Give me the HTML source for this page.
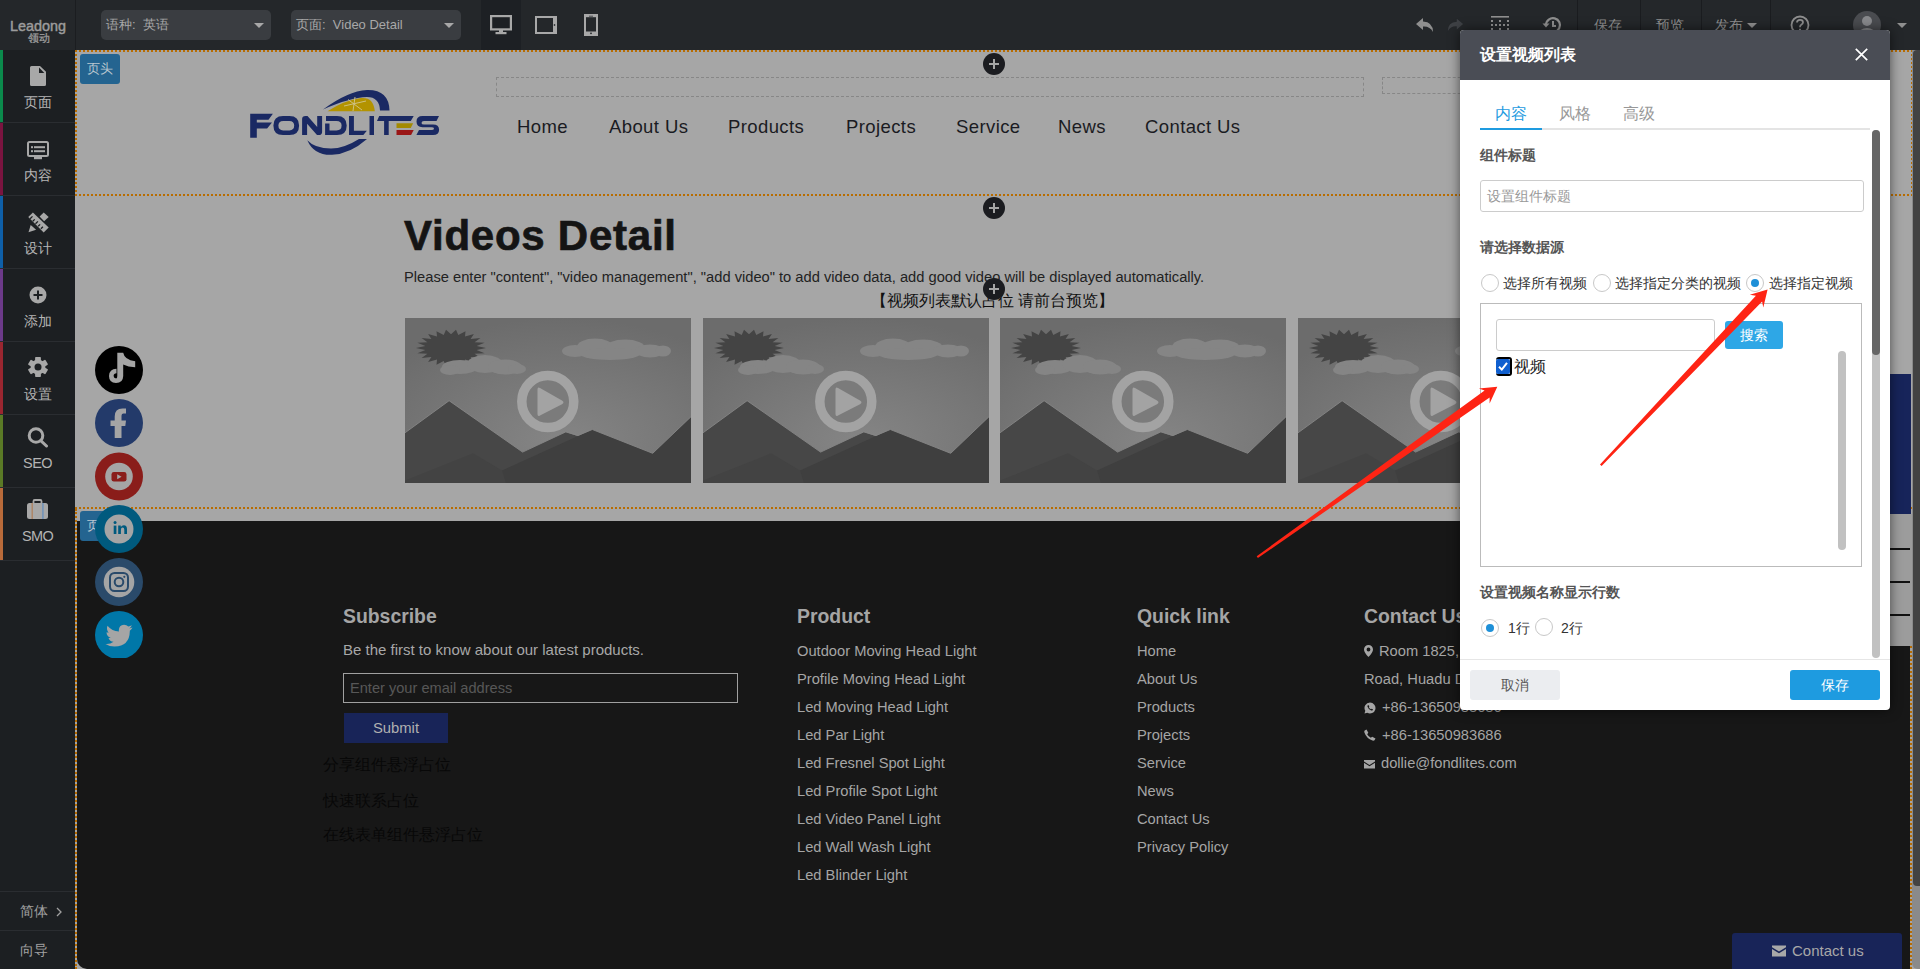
<!DOCTYPE html>
<html><head><meta charset="utf-8">
<style>
*{margin:0;padding:0;box-sizing:border-box}
html,body{width:1920px;height:969px;overflow:hidden;background:#a6a6a6;font-family:"Liberation Sans",sans-serif}
.a{position:absolute}
#top{left:0;top:0;width:1920px;height:50px;background:#24272a}
#logo{left:0;top:0;width:76px;height:50px;background:#24272a;border-right:1px solid #1b1d20}
.dd{top:10px;height:30px;width:170px;background:#3a3d41;border-radius:5px;color:#a8a8a8;font-size:13px;line-height:30px;padding-left:5px}
.dd i{position:absolute;right:7px;top:13px;width:0;height:0;border-left:5px solid transparent;border-right:5px solid transparent;border-top:5px solid #a8a8a8}
#side{left:0;top:50px;width:75px;height:919px;background:#1c1f22}
.si{left:0;width:75px;height:73px;border-bottom:1px solid #2a2d31;color:#b4b4b4;font-size:14px;text-align:center}
.si b{position:absolute;left:0;top:0;width:3px;height:72px}
.si span{position:absolute;left:0;width:75px;top:44px;line-height:16px}
#canvas{left:75px;top:50px;width:1837px;height:919px;background:#a6a6a6}
#footer{left:77px;top:521px;width:1835px;height:448px;background:#171717;border-bottom-left-radius:10px}
.dot{border:2px dotted #c27a12}
.nav{top:114px;font-size:18.5px;letter-spacing:0.4px;color:#1a1b22;line-height:26px}
.plus{width:22px;height:22px;border-radius:50%;background:#1b1c20}
.plus:before{content:"";position:absolute;left:6px;top:10px;width:10px;height:2px;background:#a5a5a5}
.plus:after{content:"";position:absolute;left:10px;top:6px;width:2px;height:10px;background:#a5a5a5}
.fh{top:603px;font-size:19.4px;font-weight:bold;color:#a5a5a5;line-height:26px}
.ft{font-size:15px;color:#a8a8a8;line-height:20px}
.fl{font-size:14.7px;color:#a5a5a5;line-height:28px;height:28px;white-space:nowrap}
.lbl{font-size:14px;font-weight:bold;color:#555;line-height:20px}
.rad{width:18px;height:18px;border:1px solid #c8c8c8;border-radius:50%;background:#fff}
.rad.on:after{content:"";position:absolute;left:4px;top:4px;width:8px;height:8px;border-radius:50%;background:#1e90d8}
.rtx{font-size:14px;color:#333;line-height:20px}
</style></head>
<body>
<div class="a" id="canvas"></div>
<div class="a" id="footer"></div>

<!-- header section -->
<div class="a" style="left:75px;top:50px;width:1838px;height:146px;border:2px dotted #b86c00"></div>
<div class="a" style="left:80px;top:54px;width:40px;height:30px;background:#246490;border-radius:3px;color:#b9c6cf;font-size:12.5px;line-height:30px;text-align:center">页头</div>
<div class="a" style="left:496px;top:77px;width:868px;height:20px;border:1px dashed #878787"></div>
<div class="a" style="left:1382px;top:77px;width:200px;height:17px;border:1px dashed #878787"></div>
<div class="a nav" style="left:517px">Home</div>
<div class="a nav" style="left:609px">About Us</div>
<div class="a nav" style="left:728px">Products</div>
<div class="a nav" style="left:846px">Projects</div>
<div class="a nav" style="left:956px">Service</div>
<div class="a nav" style="left:1058px">News</div>
<div class="a nav" style="left:1145px">Contact Us</div>
<svg class="a" style="left:240px;top:80px" width="210" height="85" viewBox="0 0 210 85">
 <g fill="#1a2963" fill-rule="evenodd">
  <path d="M10.2 33.7H32.9L28.5 39.8H16.8V42.5H32L27.1 48.5H16.8V57.8H10.2Z"/>
  <path d="M43 35.9H49.5Q59.1 35.9 59.1 45.5Q59.1 55.1 49.5 55.1H43Q33.4 55.1 33.4 45.5Q33.4 35.9 43 35.9ZM43.2 40.9Q38.4 40.9 38.4 45.6Q38.4 50.4 43.2 50.4H49.4Q54.2 50.4 54.2 45.6Q54.2 40.9 49.4 40.9Z"/>
  <path d="M62.1 55.1V39Q62.1 35.9 65.5 35.9H67.5L77.2 47V35.9H82.1V52Q82.1 55.1 78.7 55.1H77L67.1 43.8V55.1Z"/>
  <path d="M86 35.9H97Q106.7 35.9 106.7 45.5Q106.7 55.1 97 55.1H85.1V43.6H89.5V50.4H96.5Q101.6 50.4 101.6 45.5Q101.6 40.9 96.5 40.9H86Z"/>
  <path d="M109 36H113.9V50.7H126.9L123.3 55H109Z"/>
  <path d="M129.5 36H134V55H129.5Z"/>
  <path d="M139.2 36.1H173.7L170.8 41H148.7V55H144.1V41H137Z"/>
  <path d="M199 36.1L196.5 41H184Q181.5 41 181.5 43Q181.5 44.6 184 44.6H193Q199.1 44.6 199.1 49.8Q199.1 55 193 55H176.4L179 50.1H191.5Q194 50.1 194 48.5Q194 47.2 191.5 47.2H182.5Q176.5 47.2 176.5 41.6Q176.5 36.1 182.5 36.1Z"/>
  <path d="M83 29.5Q108 11 127 10Q149 9.5 149.5 30.6H140Q139.5 17 127 17Q110 17.5 83 29.5Z"/>
  <path d="M67.3 60.2Q74 75.5 92 74.8Q110 74 127 59H119Q104 68.5 91 68.5Q75 68.5 67.3 60.2Z"/>
 </g>
 <path d="M156.5 43.2H173.1L170.8 48.1H156.5Z" fill="#a38a00"/>
 <path d="M156.5 50.1H173.7L171.1 55H156.5Z" fill="#9a1616"/>
 <path d="M87.5 31.2Q104 20.5 121 18Q133.5 16.8 134.8 31.2Z" fill="#b39300"/>
 <path d="M104 26L126 21M108 19.5L122 30M115 17L113 31" stroke="#d0c590" stroke-width="0.9"/>
</svg>
<div class="a plus" style="left:983px;top:53px"></div>

<!-- content section -->
<div class="a plus" style="left:983px;top:197px"></div>
<div class="a" id="vtitle" style="left:404px;top:212px;font-size:42px;font-weight:bold;color:#141414;line-height:48px;letter-spacing:0.75px;-webkit-text-stroke:0.7px #141414">Videos Detail</div>
<div class="a" style="left:404px;top:267px;font-size:14.7px;color:#222;line-height:20px">Please enter "content", "video management", "add video" to add video data, add good video will be displayed automatically.</div>
<div class="a" style="left:871px;top:291px;font-size:16px;color:#111;line-height:20px;letter-spacing:-0.1px">【视频列表默认占位 请前台预览】</div>
<div class="a plus" style="left:983px;top:278px"></div>
<div class="a" style="left:75px;top:507px;width:1838px;height:2px;border-top:2px dotted #b86c00"></div>
<div class="a" style="left:75px;top:509px;width:2px;height:460px;border-left:2px dotted #b86c00;background:#a5a5a5"></div>

<div class="a" style="left:405px;top:318px;width:286px;height:165px;overflow:hidden"><svg width="286" height="165" viewBox="0 0 286 165"><defs><radialGradient id="sky" cx="0.55" cy="0.75" r="0.75"><stop offset="0" stop-color="#858585"/><stop offset="1" stop-color="#6c6c6c"/></radialGradient></defs>
<rect width="286" height="165" fill="url(#sky)"/>
<path d="M81.0 30.0L71.6 31.9L79.6 35.2L69.6 35.7L75.4 40.0L65.6 39.0L68.9 44.0L60.0 41.5L60.5 46.8L53.3 43.1L51.0 48.3L46.0 43.7L41.0 48.3L38.7 43.1L31.5 46.8L32.0 41.5L23.1 44.0L26.4 39.0L16.6 40.0L22.4 35.7L12.4 35.2L20.4 31.9L11.0 30.0L20.4 28.1L12.4 24.8L22.4 24.3L16.6 20.0L26.4 21.0L23.1 16.0L32.0 18.5L31.5 13.2L38.7 16.9L41.0 11.7L46.0 16.3L51.0 11.7L53.3 16.9L60.5 13.2L60.0 18.5L68.9 16.0L65.6 21.0L75.4 20.0L69.6 24.3L79.6 24.8L71.6 28.1Z" fill="#444"/>
<g fill="#858585"><ellipse cx="55" cy="49" rx="18" ry="7"/><ellipse cx="80" cy="46" rx="18" ry="9"/><ellipse cx="100" cy="49" rx="17" ry="7.5"/><ellipse cx="112" cy="51" rx="9" ry="5"/><ellipse cx="45" cy="52" rx="10" ry="5"/>
<ellipse cx="170" cy="33" rx="13" ry="6"/><ellipse cx="190" cy="29" rx="18" ry="8.5"/><ellipse cx="220" cy="30" rx="20" ry="8.5"/><ellipse cx="245" cy="33" rx="15" ry="6.5"/><ellipse cx="258" cy="33" rx="8" ry="5.5"/><ellipse cx="205" cy="36" rx="30" ry="6"/></g>
<path d="M0 114.8L44.1 82.7L117.6 134.1L160.8 113.9L205 129L205 165L0 165Z" fill="#474747"/>
<path d="M0 114.8L44.1 82.7L117.6 134.1L160.8 113.9L172.8 117.5" fill="none" stroke="#868686" stroke-width="0.9"/>
<path d="M97 152.4L187.3 111.5L247.7 135.3L286 98.7L286 165L97 165Z" fill="#3f3f3f"/>
<path d="M172.8 117.5L187.3 111.5L247.7 135.3L286 98.7" fill="none" stroke="#868686" stroke-width="0.9"/>
<path d="M0 162.6L68.1 135.3L97 152.4L101 165L0 165Z" fill="#434343"/>
<circle cx="142.8" cy="83.6" r="26" fill="#7b7b7b" stroke="#a3a3a3" stroke-width="9.5"/>
<path d="M135 70Q132.5 68.5 132.5 71.5V96Q132.5 99 135 97.5L157 86.2Q160 84.3 157 82.5Z" fill="#a3a3a3"/>
</svg></div>
<div class="a" style="left:703px;top:318px;width:286px;height:165px;overflow:hidden"><svg width="286" height="165" viewBox="0 0 286 165"><defs><radialGradient id="sky" cx="0.55" cy="0.75" r="0.75"><stop offset="0" stop-color="#858585"/><stop offset="1" stop-color="#6c6c6c"/></radialGradient></defs>
<rect width="286" height="165" fill="url(#sky)"/>
<path d="M81.0 30.0L71.6 31.9L79.6 35.2L69.6 35.7L75.4 40.0L65.6 39.0L68.9 44.0L60.0 41.5L60.5 46.8L53.3 43.1L51.0 48.3L46.0 43.7L41.0 48.3L38.7 43.1L31.5 46.8L32.0 41.5L23.1 44.0L26.4 39.0L16.6 40.0L22.4 35.7L12.4 35.2L20.4 31.9L11.0 30.0L20.4 28.1L12.4 24.8L22.4 24.3L16.6 20.0L26.4 21.0L23.1 16.0L32.0 18.5L31.5 13.2L38.7 16.9L41.0 11.7L46.0 16.3L51.0 11.7L53.3 16.9L60.5 13.2L60.0 18.5L68.9 16.0L65.6 21.0L75.4 20.0L69.6 24.3L79.6 24.8L71.6 28.1Z" fill="#444"/>
<g fill="#858585"><ellipse cx="55" cy="49" rx="18" ry="7"/><ellipse cx="80" cy="46" rx="18" ry="9"/><ellipse cx="100" cy="49" rx="17" ry="7.5"/><ellipse cx="112" cy="51" rx="9" ry="5"/><ellipse cx="45" cy="52" rx="10" ry="5"/>
<ellipse cx="170" cy="33" rx="13" ry="6"/><ellipse cx="190" cy="29" rx="18" ry="8.5"/><ellipse cx="220" cy="30" rx="20" ry="8.5"/><ellipse cx="245" cy="33" rx="15" ry="6.5"/><ellipse cx="258" cy="33" rx="8" ry="5.5"/><ellipse cx="205" cy="36" rx="30" ry="6"/></g>
<path d="M0 114.8L44.1 82.7L117.6 134.1L160.8 113.9L205 129L205 165L0 165Z" fill="#474747"/>
<path d="M0 114.8L44.1 82.7L117.6 134.1L160.8 113.9L172.8 117.5" fill="none" stroke="#868686" stroke-width="0.9"/>
<path d="M97 152.4L187.3 111.5L247.7 135.3L286 98.7L286 165L97 165Z" fill="#3f3f3f"/>
<path d="M172.8 117.5L187.3 111.5L247.7 135.3L286 98.7" fill="none" stroke="#868686" stroke-width="0.9"/>
<path d="M0 162.6L68.1 135.3L97 152.4L101 165L0 165Z" fill="#434343"/>
<circle cx="142.8" cy="83.6" r="26" fill="#7b7b7b" stroke="#a3a3a3" stroke-width="9.5"/>
<path d="M135 70Q132.5 68.5 132.5 71.5V96Q132.5 99 135 97.5L157 86.2Q160 84.3 157 82.5Z" fill="#a3a3a3"/>
</svg></div>
<div class="a" style="left:1000px;top:318px;width:286px;height:165px;overflow:hidden"><svg width="286" height="165" viewBox="0 0 286 165"><defs><radialGradient id="sky" cx="0.55" cy="0.75" r="0.75"><stop offset="0" stop-color="#858585"/><stop offset="1" stop-color="#6c6c6c"/></radialGradient></defs>
<rect width="286" height="165" fill="url(#sky)"/>
<path d="M81.0 30.0L71.6 31.9L79.6 35.2L69.6 35.7L75.4 40.0L65.6 39.0L68.9 44.0L60.0 41.5L60.5 46.8L53.3 43.1L51.0 48.3L46.0 43.7L41.0 48.3L38.7 43.1L31.5 46.8L32.0 41.5L23.1 44.0L26.4 39.0L16.6 40.0L22.4 35.7L12.4 35.2L20.4 31.9L11.0 30.0L20.4 28.1L12.4 24.8L22.4 24.3L16.6 20.0L26.4 21.0L23.1 16.0L32.0 18.5L31.5 13.2L38.7 16.9L41.0 11.7L46.0 16.3L51.0 11.7L53.3 16.9L60.5 13.2L60.0 18.5L68.9 16.0L65.6 21.0L75.4 20.0L69.6 24.3L79.6 24.8L71.6 28.1Z" fill="#444"/>
<g fill="#858585"><ellipse cx="55" cy="49" rx="18" ry="7"/><ellipse cx="80" cy="46" rx="18" ry="9"/><ellipse cx="100" cy="49" rx="17" ry="7.5"/><ellipse cx="112" cy="51" rx="9" ry="5"/><ellipse cx="45" cy="52" rx="10" ry="5"/>
<ellipse cx="170" cy="33" rx="13" ry="6"/><ellipse cx="190" cy="29" rx="18" ry="8.5"/><ellipse cx="220" cy="30" rx="20" ry="8.5"/><ellipse cx="245" cy="33" rx="15" ry="6.5"/><ellipse cx="258" cy="33" rx="8" ry="5.5"/><ellipse cx="205" cy="36" rx="30" ry="6"/></g>
<path d="M0 114.8L44.1 82.7L117.6 134.1L160.8 113.9L205 129L205 165L0 165Z" fill="#474747"/>
<path d="M0 114.8L44.1 82.7L117.6 134.1L160.8 113.9L172.8 117.5" fill="none" stroke="#868686" stroke-width="0.9"/>
<path d="M97 152.4L187.3 111.5L247.7 135.3L286 98.7L286 165L97 165Z" fill="#3f3f3f"/>
<path d="M172.8 117.5L187.3 111.5L247.7 135.3L286 98.7" fill="none" stroke="#868686" stroke-width="0.9"/>
<path d="M0 162.6L68.1 135.3L97 152.4L101 165L0 165Z" fill="#434343"/>
<circle cx="142.8" cy="83.6" r="26" fill="#7b7b7b" stroke="#a3a3a3" stroke-width="9.5"/>
<path d="M135 70Q132.5 68.5 132.5 71.5V96Q132.5 99 135 97.5L157 86.2Q160 84.3 157 82.5Z" fill="#a3a3a3"/>
</svg></div>
<div class="a" style="left:1298px;top:318px;width:286px;height:165px;overflow:hidden"><svg width="286" height="165" viewBox="0 0 286 165"><defs><radialGradient id="sky" cx="0.55" cy="0.75" r="0.75"><stop offset="0" stop-color="#858585"/><stop offset="1" stop-color="#6c6c6c"/></radialGradient></defs>
<rect width="286" height="165" fill="url(#sky)"/>
<path d="M81.0 30.0L71.6 31.9L79.6 35.2L69.6 35.7L75.4 40.0L65.6 39.0L68.9 44.0L60.0 41.5L60.5 46.8L53.3 43.1L51.0 48.3L46.0 43.7L41.0 48.3L38.7 43.1L31.5 46.8L32.0 41.5L23.1 44.0L26.4 39.0L16.6 40.0L22.4 35.7L12.4 35.2L20.4 31.9L11.0 30.0L20.4 28.1L12.4 24.8L22.4 24.3L16.6 20.0L26.4 21.0L23.1 16.0L32.0 18.5L31.5 13.2L38.7 16.9L41.0 11.7L46.0 16.3L51.0 11.7L53.3 16.9L60.5 13.2L60.0 18.5L68.9 16.0L65.6 21.0L75.4 20.0L69.6 24.3L79.6 24.8L71.6 28.1Z" fill="#444"/>
<g fill="#858585"><ellipse cx="55" cy="49" rx="18" ry="7"/><ellipse cx="80" cy="46" rx="18" ry="9"/><ellipse cx="100" cy="49" rx="17" ry="7.5"/><ellipse cx="112" cy="51" rx="9" ry="5"/><ellipse cx="45" cy="52" rx="10" ry="5"/>
<ellipse cx="170" cy="33" rx="13" ry="6"/><ellipse cx="190" cy="29" rx="18" ry="8.5"/><ellipse cx="220" cy="30" rx="20" ry="8.5"/><ellipse cx="245" cy="33" rx="15" ry="6.5"/><ellipse cx="258" cy="33" rx="8" ry="5.5"/><ellipse cx="205" cy="36" rx="30" ry="6"/></g>
<path d="M0 114.8L44.1 82.7L117.6 134.1L160.8 113.9L205 129L205 165L0 165Z" fill="#474747"/>
<path d="M0 114.8L44.1 82.7L117.6 134.1L160.8 113.9L172.8 117.5" fill="none" stroke="#868686" stroke-width="0.9"/>
<path d="M97 152.4L187.3 111.5L247.7 135.3L286 98.7L286 165L97 165Z" fill="#3f3f3f"/>
<path d="M172.8 117.5L187.3 111.5L247.7 135.3L286 98.7" fill="none" stroke="#868686" stroke-width="0.9"/>
<path d="M0 162.6L68.1 135.3L97 152.4L101 165L0 165Z" fill="#434343"/>
<circle cx="142.8" cy="83.6" r="26" fill="#7b7b7b" stroke="#a3a3a3" stroke-width="9.5"/>
<path d="M135 70Q132.5 68.5 132.5 71.5V96Q132.5 99 135 97.5L157 86.2Q160 84.3 157 82.5Z" fill="#a3a3a3"/>
</svg></div>

<!-- footer -->
<div class="a" style="left:80px;top:511px;width:40px;height:30px;background:#246490;border-radius:3px;color:#b9c6cf;font-size:12.5px;line-height:30px;text-align:center">页尾</div>
<div class="a fh" style="left:343px">Subscribe</div>
<div class="a ft" style="left:343px;top:640px">Be the first to know about our latest products.</div>
<div class="a" style="left:343px;top:673px;width:395px;height:30px;border:1px solid #a0a0a0;color:#575757;font-size:14.6px;line-height:28px;padding-left:6px">Enter your email address</div>
<div class="a" style="left:344px;top:713px;width:104px;height:30px;background:#182458;color:#b0b0b0;font-size:14.8px;line-height:30px;text-align:center">Submit</div>
<div class="a" style="left:323px;top:755px;color:#080808;font-size:16px;line-height:20px">分享组件悬浮占位</div>
<div class="a" style="left:323px;top:791px;color:#080808;font-size:16px;line-height:20px">快速联系占位</div>
<div class="a" style="left:323px;top:825px;color:#080808;font-size:16px;line-height:20px">在线表单组件悬浮占位</div>
<div class="a fh" style="left:797px">Product</div>
<div class="a" style="left:797px;top:637px">
<div class="fl">Outdoor Moving Head Light</div><div class="fl">Profile Moving Head Light</div><div class="fl">Led Moving Head Light</div><div class="fl">Led Par Light</div><div class="fl">Led Fresnel Spot Light</div><div class="fl">Led Profile Spot Light</div><div class="fl">Led Video Panel Light</div><div class="fl">Led Wall Wash Light</div><div class="fl">Led Blinder Light</div></div>
<div class="a fh" style="left:1137px">Quick link</div>
<div class="a" style="left:1137px;top:637px">
<div class="fl">Home</div><div class="fl">About Us</div><div class="fl">Products</div><div class="fl">Projects</div><div class="fl">Service</div><div class="fl">News</div><div class="fl">Contact Us</div><div class="fl">Privacy Policy</div></div>
<div class="a fh" style="left:1364px">Contact Us</div>
<div class="a" style="left:1364px;top:637px">
<div class="fl"><svg style="vertical-align:-1px;margin-right:6px" width="9" height="12" viewBox="0 0 9 12"><path d="M4.5 0A4.5 4.5 0 0 0 0 4.5C0 7.5 4.5 12 4.5 12S9 7.5 9 4.5A4.5 4.5 0 0 0 4.5 0ZM4.5 2.6A1.9 1.9 0 1 1 4.5 6.4A1.9 1.9 0 1 1 4.5 2.6Z" fill="#a5a5a5"/></svg>Room 1825, Huadu</div>
<div class="fl">Road, Huadu District</div>
<div class="fl"><svg style="vertical-align:-2px;margin-right:6px" width="12" height="12" viewBox="0 0 12 12"><path d="M6 0.5A5.5 5.5 0 0 0 1.3 8.8L0.5 11.5L3.3 10.8A5.5 5.5 0 1 0 6 0.5Z" fill="#a5a5a5"/><path d="M3.8 3.3Q3.3 3.8 3.5 4.8Q4.3 7.3 7.2 8.5Q8.3 8.8 8.8 8L8.9 7.3L7.6 6.7L7 7.3Q5.6 6.7 4.8 5.3L5.3 4.6L4.7 3.3Z" fill="#171717"/></svg>+86-13650983686</div>
<div class="fl"><svg style="vertical-align:-1px;margin-right:6px" width="12" height="12" viewBox="0 0 12 12"><path d="M2.5 0.5L4.3 3.8L3.2 5.2Q4.5 7.6 6.8 8.8L8.2 7.7L11.5 9.5L10.5 11.3Q9.8 12 8.5 11.6Q2.5 9.5 0.4 3.5Q0 2.2 0.7 1.5Z" fill="#a5a5a5"/></svg>+86-13650983686</div>
<div class="fl"><svg style="vertical-align:-1px;margin-right:6px" width="11" height="10" viewBox="0 0 11 10"><path d="M0 1H11V2.5L5.5 6L0 2.5Z M0 3.8L5.5 7.3L11 3.8V9.5H0Z" fill="#a5a5a5"/></svg>dollie@fondlites.com</div>
</div>
<div class="a" style="left:1732px;top:933px;width:170px;height:36px;border-radius:3px 3px 0 0;background:#182458;color:#a8a8a8;font-size:15px;line-height:36px;padding-left:40px"><svg class="a" style="left:40px;top:12px" width="14" height="12" viewBox="0 0 14 12"><path d="M0 0.5H14V2.3L7 6.6L0 2.3Z M0 4L7 8.3L14 4V11.5H0Z" fill="#a8a8a8"/></svg><span style="margin-left:20px">Contact us</span></div>


<!-- social -->
<svg class="a" style="left:95px;top:346px" width="48" height="312" viewBox="0 0 48 312">
 <circle cx="24" cy="24" r="24" fill="#000"/>
 <path d="M22.3 6.8H28.2Q29.5 14 40.2 15.3V21.3Q33 21 28.2 18.5V30Q28 37 21 37Q14 36.8 14 30Q14.2 23 21.5 22.8V27.3Q18.7 27.5 18.6 30Q18.7 32.4 21.2 32.4Q22.3 32.3 22.3 30Z" fill="#a5a5a5"/>
 <circle cx="24" cy="77" r="24" fill="#233a6a"/>
 <path d="M19.7 92V80H15.5V74.6H19.7V70.5Q19.7 62.5 27.5 62.5H31V67.5H28.5Q26.5 67.5 26.5 69.8V74.6H31L30.3 80H26.5V92Z" fill="#a5a5a5"/>
 <circle cx="24" cy="130.5" r="24" fill="#8a1d1a"/>
 <circle cx="24" cy="130.5" r="13.8" fill="#a5a5a5"/>
 <rect x="16.5" y="126" width="15" height="9.6" rx="2.4" fill="#8a1d1a"/>
 <path d="M22.2 128.2V133.2L26.6 130.7Z" fill="#a5a5a5"/>
 <circle cx="24" cy="183" r="24" fill="#005a7e"/>
 <circle cx="24" cy="183" r="14.5" fill="#a5a5a5"/>
 <g fill="#005a7e"><rect x="18.7" y="179.6" width="2.7" height="8.4"/><circle cx="20.05" cy="176.6" r="1.5"/><path d="M23.2 179.6H25.8V180.9Q26.8 179.3 28.9 179.3Q32 179.3 32 183.2V188H29.3V183.7Q29.3 181.6 27.7 181.6Q25.9 181.6 25.9 183.9V188H23.2Z"/></g>
 <circle cx="24" cy="236" r="24" fill="#2a4a6a"/>
 <circle cx="24" cy="236" r="15.3" fill="#a5a5a5"/>
 <rect x="15" y="227" width="18" height="18" rx="4.5" fill="none" stroke="#2a4a6a" stroke-width="2"/>
 <circle cx="24" cy="236" r="4.3" fill="none" stroke="#2a4a6a" stroke-width="2"/>
 <circle cx="29.3" cy="230.8" r="1.1" fill="#2a4a6a"/>
 <circle cx="24" cy="289" r="24" fill="#0077a8"/>
 <path d="M37.5 281.5Q36 282.2 34.3 282.4Q36.2 281.2 36.8 279.3Q35.2 280.3 33.3 280.6Q31.6 278.8 29 278.8Q24 279 23.8 284.3L23.9 285.5Q17 285.2 12.5 279.7Q11 283.3 13.6 286.8Q12.4 286.7 11.5 286.3Q11.7 290.5 15.7 291.8Q14.5 292.2 13.5 292Q14.7 295.5 18.5 295.8Q15 298.5 10.5 298Q14.5 300.5 19.5 300.5Q34.5 300.2 34.8 285.5V284.8Q36.5 283.5 37.5 281.5Z" fill="#a5a5a5"/>
</svg>
<div class="a" id="top"></div>
<div class="a" id="logo"></div>
<div class="a dd" style="left:101px">语种:&nbsp; 英语<i></i></div>
<div class="a dd" style="left:291px">页面:&nbsp; Video Detail<i></i></div>


<div class="a" style="left:481px;top:0;width:40px;height:50px;background:#1d2024"></div>
<svg class="a" style="left:490px;top:15px" width="22" height="20" viewBox="0 0 22 20"><rect x="1.1" y="1.1" width="19.8" height="13.3" fill="none" stroke="#a8a8a8" stroke-width="2.2"/><rect x="9" y="14.5" width="4" height="2.5" fill="#a8a8a8"/><rect x="5.5" y="17" width="11" height="2.2" fill="#a8a8a8"/></svg>
<svg class="a" style="left:535px;top:16px" width="22" height="18" viewBox="0 0 22 18"><rect x="1" y="1" width="20" height="16" fill="none" stroke="#a8a8a8" stroke-width="2"/><rect x="18" y="1" width="3" height="16" fill="#a8a8a8"/><rect x="18.8" y="8.2" width="1.4" height="1.6" fill="#23262a"/></svg>
<svg class="a" style="left:584px;top:14px" width="14" height="22" viewBox="0 0 14 22"><rect x="1" y="1" width="12" height="20" fill="none" stroke="#a8a8a8" stroke-width="2"/><rect x="1" y="1" width="12" height="2.2" fill="#a8a8a8"/><rect x="1" y="17.5" width="12" height="3.5" fill="#a8a8a8"/><rect x="5" y="1.8" width="4" height="0.7" fill="#23262a"/><rect x="6.2" y="18.6" width="1.6" height="1.5" fill="#23262a"/></svg>
<svg class="a" style="left:1415px;top:17px" width="20" height="16" viewBox="0 0 20 16"><path d="M8 1L1 7L8 13V9.5Q15 9 18 15Q18 5 8 4.5Z" fill="#8f8f8f"/></svg>
<svg class="a" style="left:1446px;top:17px" width="18" height="16" viewBox="0 0 20 16"><path d="M12 1L19 7L12 13V9.5Q5 9 2 15Q2 5 12 4.5Z" fill="#3e4145"/></svg>
<svg class="a" style="left:1490px;top:15px" width="20" height="17" viewBox="0 0 20 17"><rect x="1" y="1" width="18" height="1.6" fill="#8f8f8f"/><g fill="#8f8f8f"><rect x="1" y="5" width="2" height="2"/><rect x="9" y="5" width="2" height="2"/><rect x="17" y="5" width="2" height="2"/><rect x="1" y="9" width="2" height="2"/><rect x="5" y="9" width="2" height="2"/><rect x="9" y="9" width="2" height="2"/><rect x="13" y="9" width="2" height="2"/><rect x="17" y="9" width="2" height="2"/><rect x="1" y="13" width="2" height="2"/><rect x="9" y="13" width="2" height="2"/><rect x="17" y="13" width="2" height="2"/></g></svg>
<svg class="a" style="left:1542px;top:16px" width="20" height="18" viewBox="0 0 20 18"><path d="M4 9A7 7 0 1 1 6.5 14.5" fill="none" stroke="#8f8f8f" stroke-width="2.2"/><path d="M0.5 7.5L4 11.5L7.5 7.5Z" fill="#8f8f8f"/><path d="M11 5V10H14" fill="none" stroke="#8f8f8f" stroke-width="2"/></svg>
<div class="a" style="left:1577px;top:0;width:1px;height:30px;background:#1a1c1f"></div>
<div class="a" style="left:1640px;top:0;width:1px;height:30px;background:#1a1c1f"></div>
<div class="a" style="left:1701px;top:0;width:1px;height:30px;background:#1a1c1f"></div>
<div class="a" style="left:1770px;top:0;width:1px;height:30px;background:#1a1c1f"></div>
<div class="a" style="left:1594px;top:15px;color:#8f8f8f;font-size:14px;line-height:20px">保存</div>
<div class="a" style="left:1656px;top:15px;color:#8f8f8f;font-size:14px;line-height:20px">预览</div>
<div class="a" style="left:1715px;top:15px;color:#8f8f8f;font-size:14px;line-height:20px">发布</div>
<div class="a" style="left:1747px;top:23px;width:0;height:0;border-left:5px solid transparent;border-right:5px solid transparent;border-top:5px solid #8f8f8f"></div>
<svg class="a" style="left:1790px;top:15px" width="20" height="20" viewBox="0 0 20 20"><circle cx="10" cy="10" r="8.5" fill="none" stroke="#8f8f8f" stroke-width="1.8"/><path d="M7 7.5Q7 4.8 10 4.8Q13 4.8 13 7.3Q13 9 11 10Q10 10.6 10 12.3" fill="none" stroke="#8f8f8f" stroke-width="1.8"/><rect x="9" y="13.8" width="2" height="2" fill="#8f8f8f"/></svg>
<div class="a" style="left:1853px;top:11px;width:28px;height:28px;border-radius:50%;background:#4a4c50;overflow:hidden"><div class="a" style="left:9px;top:5px;width:10px;height:10px;border-radius:50%;background:#88898c"></div><div class="a" style="left:5px;top:17px;width:18px;height:14px;border-radius:50% 50% 0 0;background:#88898c"></div></div>
<div class="a" style="left:1897px;top:23px;width:0;height:0;border-left:5px solid transparent;border-right:5px solid transparent;border-top:5px solid #8f8f8f"></div>
<svg class="a" style="left:9px;top:15px" width="58" height="28" viewBox="0 0 58 28"><text x="1" y="15.5" font-family="Liberation Sans" font-size="14.5" fill="#9c9c9c" stroke="#9c9c9c" stroke-width="0.45" textLength="56" lengthAdjust="spacingAndGlyphs">Leadong</text><text x="18.5" y="26.5" font-size="10.8" fill="#9c9c9c" stroke="#9c9c9c" stroke-width="0.3">领动</text></svg>

<div class="a" id="side">
 <div class="a si" style="top:0"><b style="background:#0b8a4c"></b>
  <svg class="a" style="left:30px;top:16px" width="16" height="20" viewBox="0 0 16 20"><path fill-rule="evenodd" d="M1.5 0H10L16 5.8V18.5Q16 20 14.5 20H1.5Q0 20 0 18.5V1.5Q0 0 1.5 0ZM9 1.5V7H14.3Z" fill="#a8a8a8"/></svg>
  <span>页面</span></div>
 <div class="a si" style="top:73px"><b style="background:#7a1440"></b>
  <svg class="a" style="left:27px;top:18px" width="22" height="19" viewBox="0 0 22 19"><rect x="1" y="1" width="20" height="14" rx="1.5" fill="none" stroke="#a8a8a8" stroke-width="2"/><rect x="7" y="15" width="8" height="3.2" fill="#a8a8a8"/><rect x="4" y="5.2" width="2" height="2" fill="#a8a8a8"/><rect x="7" y="5.2" width="11" height="2" fill="#a8a8a8"/><rect x="4" y="9.2" width="2" height="2" fill="#a8a8a8"/><rect x="7" y="9.2" width="11" height="2" fill="#a8a8a8"/></svg>
  <span>内容</span></div>
 <div class="a si" style="top:146px"><b style="background:#0e5fa8"></b>
  <svg class="a" style="left:28px;top:16px" width="21" height="21" viewBox="-0.5 -0.5 21 21"><g fill="#a8a8a8"><path d="M4.4 0.1L20.2 14.9L15.2 19.9L-0.25 4.4Z"/><path d="M15.2 0L20.2 4.4L15.6 8.8L11.1 3.9Z"/><path d="M0 19.8L2.2 12.4L7.6 17.3Z"/></g><g stroke="#1c1f22" stroke-width="1.3"><path d="M1.6 6.3L4 3.9M4.3 8.8L6.2 6.9M7 11.3L9.4 8.9M9.7 13.8L11.6 11.9M12.4 16.3L14.4 14.3"/><path d="M10.3 4.6L5 10" stroke-width="0"/></g></svg>
  <span>设计</span></div>
 <div class="a si" style="top:219px"><b style="background:#6c3a8a"></b>
  <svg class="a" style="left:29px;top:17px" width="18" height="18" viewBox="0 0 18 18"><circle cx="9" cy="9" r="8.5" fill="#a8a8a8"/><rect x="4.5" y="8" width="9" height="2" fill="#1c1f22"/><rect x="8" y="4.5" width="2" height="9" fill="#1c1f22"/></svg>
  <span>添加</span></div>
 <div class="a si" style="top:292px"><b style="background:#9a2630"></b>
  <svg class="a" style="left:28px;top:15px" width="20" height="20" viewBox="-10 -10 20 20"><g fill="#a8a8a8"><circle r="7.4"/><rect x="-2.9" y="-10" width="5.8" height="20" rx="0.8"/><rect x="-2.9" y="-10" width="5.8" height="20" rx="0.8" transform="rotate(60)"/><rect x="-2.9" y="-10" width="5.8" height="20" rx="0.8" transform="rotate(120)"/></g><circle r="3.5" fill="#1c1f22"/></svg>
  <span>设置</span></div>
 <div class="a si" style="top:365px"><b style="background:#5a7a26"></b>
  <svg class="a" style="left:26px;top:11px" width="24" height="22" viewBox="0 0 24 22"><circle cx="10" cy="9.5" r="6.8" fill="none" stroke="#a8a8a8" stroke-width="3"/><path d="M15 14.8L20.5 20" stroke="#a8a8a8" stroke-width="3" stroke-linecap="round"/></svg>
  <span style="font-size:14.5px;top:40px;letter-spacing:-0.6px">SEO</span></div>
 <div class="a si" style="top:438px"><b style="background:#b86a3a"></b>
  <svg class="a" style="left:26px;top:11px" width="23" height="21" viewBox="0 0 23 21"><path d="M7.5 5V2.2Q7.5 1 8.7 1H14.3Q15.5 1 15.5 2.2V5" fill="none" stroke="#a8a8a8" stroke-width="1.8"/><rect x="1" y="4" width="21" height="16" rx="2.5" fill="#a8a8a8"/><rect x="5.6" y="4" width="1.1" height="16" fill="#b07a50"/><rect x="16.4" y="4" width="1.1" height="16" fill="#5a8ac0"/></svg>
  <span style="font-size:14.5px;top:40px;letter-spacing:-0.6px">SMO</span></div>
 <div class="a" style="left:0;top:841px;width:75px;border-top:1px solid #2a2d31;height:39px;color:#a0a0a0;font-size:14px;line-height:38px;padding-left:20px">简体<svg class="a" style="left:56px;top:15px" width="6" height="10" viewBox="0 0 6 10"><path d="M1 1L5 5L1 9" fill="none" stroke="#a0a0a0" stroke-width="1.3"/></svg></div>
 <div class="a" style="left:0;top:880px;width:75px;border-top:1px solid #2a2d31;height:39px;color:#a0a0a0;font-size:14px;line-height:38px;padding-left:20px">向导</div>
</div>


<!-- right edge behind modal -->
<div class="a" style="left:1890px;top:374px;width:21px;height:140px;background:#17245a"></div>
<div class="a" style="left:1890px;top:514px;width:22px;height:132px;background:#9c9c9c"></div>
<div class="a" style="left:1890px;top:548px;width:20px;height:2px;background:#111"></div>
<div class="a" style="left:1890px;top:581px;width:20px;height:2px;background:#111"></div>
<div class="a" style="left:1890px;top:614px;width:20px;height:2px;background:#111"></div>
<div class="a" style="left:1910px;top:646px;width:2px;height:323px;border-left:2px dotted #b86c00;background:#a5a5a5"></div>
<div class="a" style="left:1912px;top:50px;width:8px;height:919px;background:#8a8a8a;border-radius:0 0 0 6px"></div><div class="a" style="left:1913px;top:50px;width:7px;height:836px;background:#424242;border-radius:4px 0 0 4px"></div>
<!-- modal -->
<div class="a" id="modal" style="left:1460px;top:30px;width:430px;height:680px;background:#fff;border-radius:4px;box-shadow:0 0 12px rgba(0,0,0,0.55);overflow:hidden">
 <div class="a" style="left:0;top:0;width:430px;height:50px;background:#4a4d55"></div>
 <div class="a" style="left:20px;top:15px;color:#fff;font-size:16px;font-weight:bold;line-height:20px">设置视频列表</div>
 <svg class="a" style="left:395px;top:18px" width="13" height="13" viewBox="0 0 13 13"><path d="M0.8 0.8L12.2 12.2M12.2 0.8L0.8 12.2" stroke="#fff" stroke-width="1.7"/></svg>
 <div class="a" style="left:20px;top:98px;width:390px;height:2px;background:#e4e4e4"></div>
 <div class="a" style="left:20px;top:98px;width:62px;height:2px;background:#1e9be0"></div>
 <div class="a" style="left:35px;top:74px;color:#1e9be0;font-size:16px;line-height:20px">内容</div>
 <div class="a" style="left:99px;top:74px;color:#999;font-size:16px;line-height:20px">风格</div>
 <div class="a" style="left:163px;top:74px;color:#999;font-size:16px;line-height:20px">高级</div>
 <div class="a" style="left:412px;top:100px;width:8px;height:528px;background:#c1c1c1;border-radius:4px"></div>
 <div class="a" style="left:412px;top:100px;width:8px;height:225px;background:#666;border-radius:4px"></div>
 <div class="a lbl" style="left:20px;top:115px">组件标题</div>
 <div class="a" style="left:20px;top:150px;width:384px;height:32px;border:1px solid #ccc;border-radius:3px;color:#999;font-size:14px;line-height:30px;padding-left:6px">设置组件标题</div>
 <div class="a lbl" style="left:20px;top:207px">请选择数据源</div>
 <div class="a rad" style="left:21px;top:244px"></div>
 <div class="a rtx" style="left:43px;top:243px">选择所有视频</div>
 <div class="a rad" style="left:133px;top:244px"></div>
 <div class="a rtx" style="left:155px;top:243px">选择指定分类的视频</div>
 <div class="a rad on" style="left:286px;top:244px"></div>
 <div class="a rtx" style="left:309px;top:243px">选择指定视频</div>
 <div class="a" style="left:20px;top:273px;width:382px;height:264px;border:1px solid #bbb"></div>
 <div class="a" style="left:36px;top:289px;width:219px;height:32px;border:1px solid #ccc;border-radius:3px"></div>
 <div class="a" style="left:265px;top:291px;width:58px;height:28px;background:#2ea7e6;border-radius:3px;color:#fff;font-size:14px;line-height:28px;text-align:center">搜索</div>
 <div class="a" style="left:36px;top:327px;width:16px;height:19px;border-radius:3px;border-right:2px solid #000;border-bottom:2px solid #000;border-top:2px solid #000"></div>
 <div class="a" style="left:36px;top:329px;width:14px;height:15px;background:#0f5fcf;border-radius:2px"></div>
 <svg class="a" style="left:38px;top:331px" width="10" height="11" viewBox="0 0 10 11"><path d="M1 5.8L3.8 8.6L9 1.8" fill="none" stroke="#fff" stroke-width="2"/></svg>
 <div class="a" style="left:54px;top:327px;color:#222;font-size:16px;line-height:20px">视频</div>
 <div class="a" style="left:378px;top:321px;width:8px;height:199px;background:#c1c1c1;border-radius:4px"></div>
 <div class="a lbl" style="left:20px;top:552px">设置视频名称显示行数</div>
 <div class="a rad on" style="left:21px;top:589px"></div>
 <div class="a rtx" style="left:48px;top:588px">1行</div>
 <div class="a rad" style="left:75px;top:588px"></div>
 <div class="a rtx" style="left:101px;top:588px">2行</div>
 <div class="a" style="left:0;top:629px;width:430px;height:1px;background:#e6e6e6"></div>
 <div class="a" style="left:10px;top:640px;width:90px;height:30px;background:#ebedf0;border-radius:3px;color:#555;font-size:14px;line-height:30px;text-align:center">取消</div>
 <div class="a" style="left:330px;top:640px;width:90px;height:30px;background:#1e9be0;border-radius:3px;color:#fff;font-size:14px;line-height:30px;text-align:center">保存</div>
</div>
<svg class="a" style="left:0;top:0" width="1920" height="969"><path d="M1497.3 386.7L1489.6 403.5L1489.6 397.4L1257.9 558.1L1256.7 556.3L1484.6 390.4L1478.9 388.4Z" fill="#fe2414"/><path d="M1767.6 289.6L1763.3 307.6L1762.1 301.6L1601.6 466.0L1600.0 464.4L1755.9 295.7L1749.8 294.8Z" fill="#fe2414"/></svg>
</body></html>
